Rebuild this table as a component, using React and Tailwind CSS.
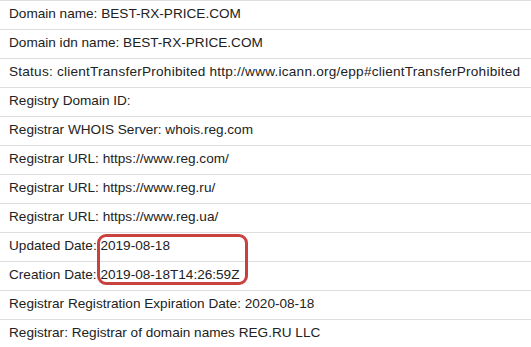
const rows = [
  "Domain name: BEST-RX-PRICE.COM",
  "Domain idn name: BEST-RX-PRICE.COM",
  "Status: clientTransferProhibited http://www.icann.org/epp#clientTransferProhibited",
  "Registry Domain ID:",
  "Registrar WHOIS Server: whois.reg.com",
  "Registrar URL: https://www.reg.com/",
  "Registrar URL: https://www.reg.ru/",
  "Registrar URL: https://www.reg.ua/",
  "Updated Date: 2019-08-18",
  "Creation Date: 2019-08-18T14:26:59Z",
  "Registrar Registration Expiration Date: 2020-08-18",
  "Registrar: Registrar of domain names REG.RU LLC",
];

export default function App() {
  return (
    <div
      className="relative w-[531px] h-[347px] overflow-hidden bg-white text-[#222] text-[13.6px]"
      style={{ fontFamily: '"Liberation Sans", Arial, sans-serif' }}
    >
      {rows.map((r, i) => (
        <div
          key={i}
          className={
            "h-[29px] border-t border-[#dedede] px-[9px] pb-[2px] flex items-center whitespace-nowrap" +
            (i === 2 ? " tracking-[0.23px]" : "")
          }
        >
          {r}
        </div>
      ))}

      {/* highlight box */}
      <div className="absolute left-[97px] top-[234px] w-[151px] h-[51px] border-[3px] border-[#c8433f] rounded-[9px]"></div>
    </div>
  );
}
